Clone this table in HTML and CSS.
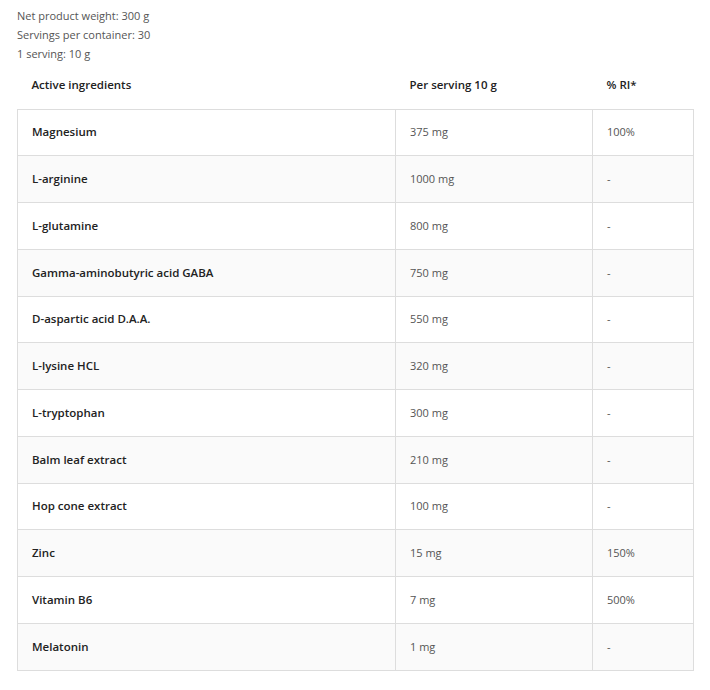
FILE: index.html
```html
<!DOCTYPE html>
<html lang="en">
<head>
<meta charset="utf-8">
<title>Product info</title>
<link rel="stylesheet" href="styles.css">
</head>
<body>
<div class="wrap">
  <div class="meta">
    <p>Net product weight: 300 g</p>
    <p>Servings per container: 30</p>
    <p>1 serving: 10 g</p>
  </div>
  <table class="facts">
    <thead>
      <tr><th class="c1">Active ingredients</th><th class="c2">Per serving 10 g</th><th class="c3">% RI*</th></tr>
    </thead>
    <tbody>
      <tr><td class="name">Magnesium</td><td>375 mg</td><td>100%</td></tr>
      <tr><td class="name">L-arginine</td><td>1000 mg</td><td>-</td></tr>
      <tr><td class="name">L-glutamine</td><td>800 mg</td><td>-</td></tr>
      <tr><td class="name">Gamma-aminobutyric acid GABA</td><td>750 mg</td><td>-</td></tr>
      <tr><td class="name">D-aspartic acid D.A.A.</td><td>550 mg</td><td>-</td></tr>
      <tr><td class="name">L-lysine HCL</td><td>320 mg</td><td>-</td></tr>
      <tr><td class="name">L-tryptophan</td><td>300 mg</td><td>-</td></tr>
      <tr><td class="name">Balm leaf extract</td><td>210 mg</td><td>-</td></tr>
      <tr><td class="name">Hop cone extract</td><td>100 mg</td><td>-</td></tr>
      <tr><td class="name">Zinc</td><td>15 mg</td><td>150%</td></tr>
      <tr><td class="name">Vitamin B6</td><td>7 mg</td><td>500%</td></tr>
      <tr><td class="name">Melatonin</td><td>1 mg</td><td>-</td></tr>
    </tbody>
  </table>
</div>
</body>
</html>
```
FILE: styles.css
```css
html, body {
  margin: 0;
  padding: 0;
  background: #ffffff;
}
body {
  font-family: "Open Sans", "Liberation Sans", sans-serif;
  font-size: 11px;
  color: #555555;
}
.wrap {
  padding: 6px 17px 0 17px;
}
.meta p {
  margin: 0;
  line-height: 19px;
}
.facts {
  width: 676px;
  border-collapse: collapse;
  table-layout: fixed;
  margin-top: 0;
}
.facts th,
.facts td {
  box-sizing: border-box;
}
.facts th {
  text-align: left;
  font-weight: 600;
  font-size: 11.5px;
  color: #222222;
  height: 46px;
  padding: 0 14px 2px 14px;
  border: none;
  border-bottom: 1px solid #dddddd;
}
.facts th.c1 { width: 378px; }
.facts th.c2 { width: 197px; }
.facts th.c3 { width: 101px; }
.facts td {
  height: 46.75px;
  padding: 0 14px 1px 14px;
  border: 1px solid #dddddd;
  color: #555555;
}
.facts td.name {
  font-weight: 600;
  font-size: 11.5px;
  color: #222222;
}
.facts tbody tr:nth-child(even) td {
  background: #fafafa;
}
```
